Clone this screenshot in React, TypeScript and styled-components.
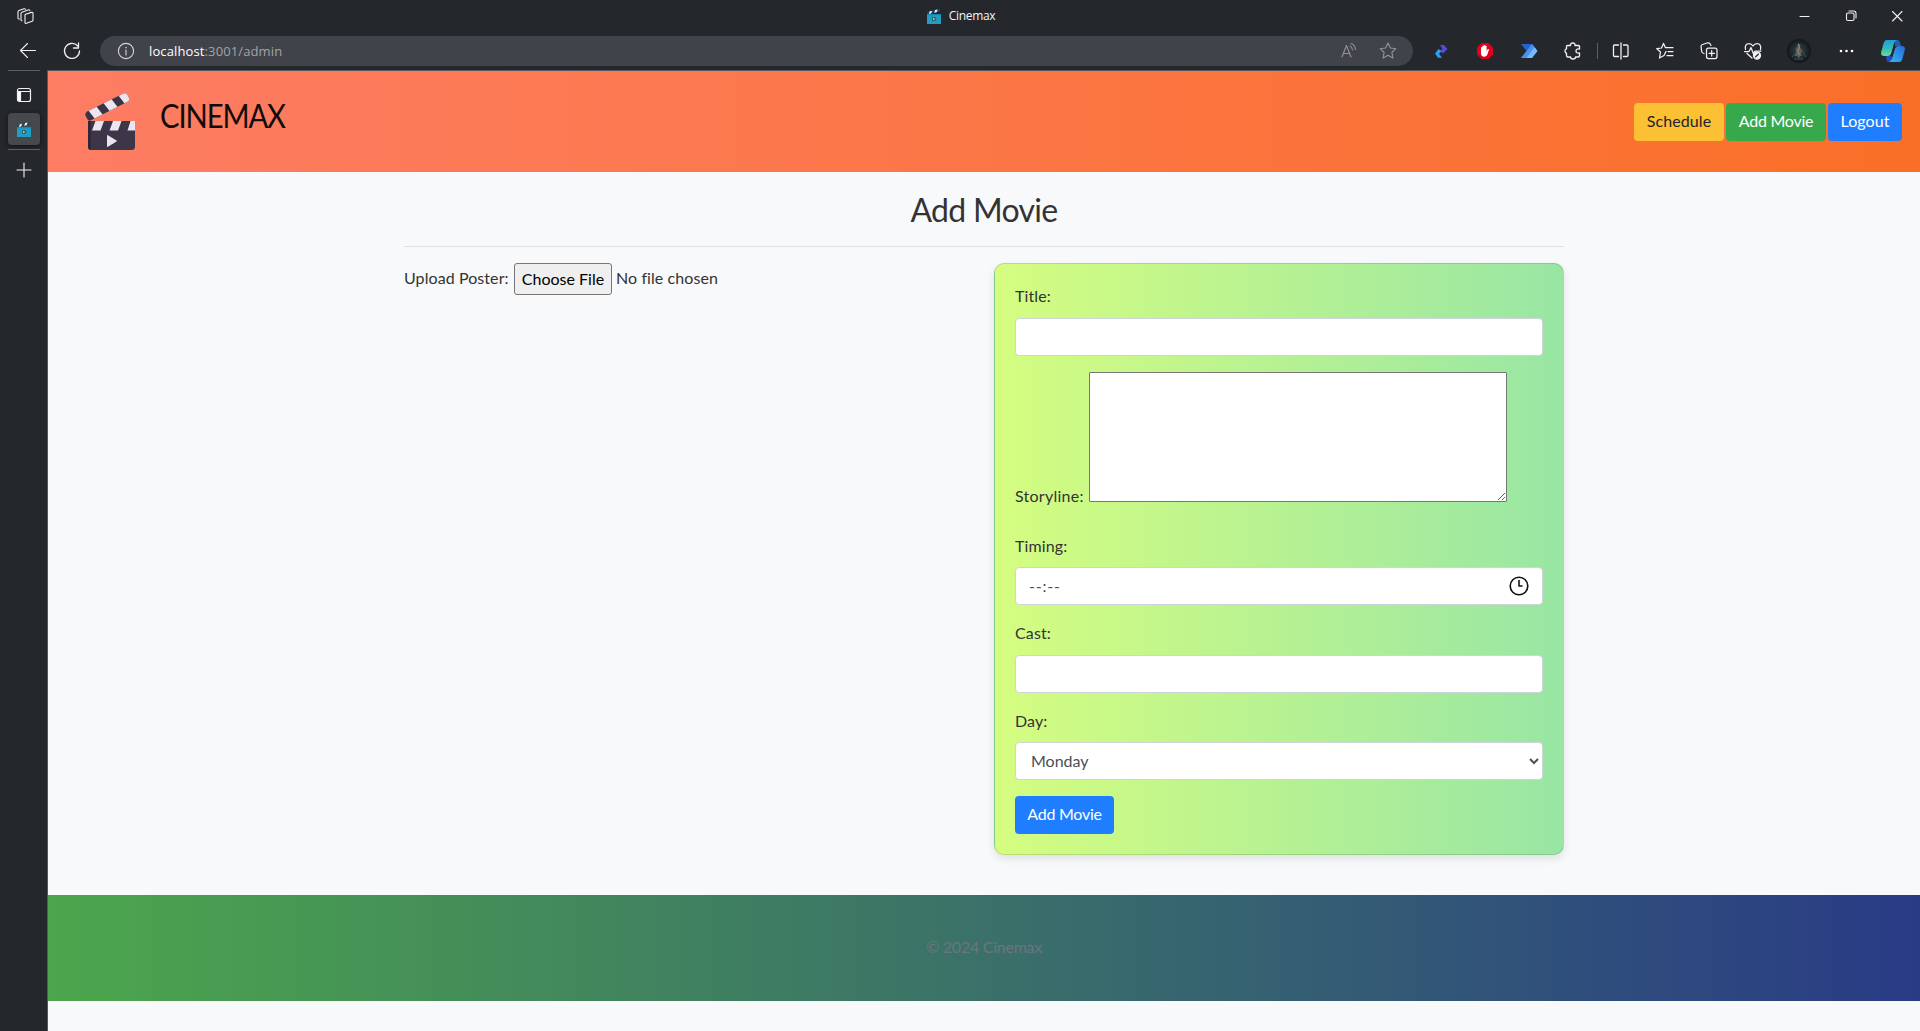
import React from "react";
import styled, { createGlobalStyle } from "styled-components";

const Global = createGlobalStyle`
  *, *::before, *::after { box-sizing: border-box; }
  html, body, #root { height: 100%; }
  body { margin: 0; background: #24272b; overflow: hidden; font-family: Lato, "Open Sans", sans-serif; font-size: 16px; line-height: 1.5; color: #333; }
`;

const Window = styled.div`display: flex; flex-direction: column; width: 1920px; height: 1031px; background: #24272b;`;
const TitleBar = styled.div`display: flex; align-items: center; justify-content: space-between; height: 34px; padding: 0 15px 2px 17px; flex: none;`;
const TabTitle = styled.div`display: flex; align-items: center; gap: 8px; margin-left: 90px; font: 12px/16px "Open Sans", sans-serif; letter-spacing: -0.3px; color: #f4f4f4;`;
const WinButtons = styled.div`display: flex; gap: 30px;`;
const Toolbar = styled.div`display: flex; align-items: center; height: 36px; padding: 0 0 2px 18px; flex: none;`;
const NavIcons = styled.div`display: flex; gap: 24px; width: 82px; flex: none;`;
const Address = styled.div`display: flex; align-items: center; width: 1313px; height: 30px; padding: 0 15px 0 16px; border-radius: 15px; background: #404349; flex: none;`;
const Url = styled.div`flex: 1; margin-left: 13px; font: 13px/20px "Open Sans", sans-serif; color: #a2a4a7; letter-spacing: 0.12px;`;
const Host = styled.span`color: #fff;`;
const AddressIcons = styled.div`display: flex; gap: 19px;`;
const Tools = styled.div`display: grid; grid-template-columns: repeat(4, 44px) 4px repeat(4, 44px) repeat(3, 47px); align-items: center; justify-items: center; margin-left: 6px;`;
const Divider = styled.div`width: 1px; height: 16px; background: #5c5f63;`;
const Body = styled.div`display: flex; flex: 1; min-height: 0;`;
const Side = styled.div`display: flex; flex-direction: column; align-items: center; width: 47px; flex: none;`;
const SideRule = styled.div`width: 32px; height: 1px; background: #5c5f63;`;
const SideSlot = styled.div<{ $h: number; $top?: number }>`display: flex; align-items: center; justify-content: center; width: 46px; height: ${p => p.$h}px; padding-top: ${p => p.$top || 0}px;`;
const ActiveTab = styled.div`display: flex; align-items: center; justify-content: center; width: 32px; height: 32px; margin-bottom: 4px; border-radius: 4px; background: #47484c; box-shadow: 0 1px 4px #111;`;
const Page = styled.div`flex: 1; border-left: 1px solid #55575b; border-top: 1px solid #55575b; background: #f8f9fb;`;

const Header = styled.header`display: flex; justify-content: space-between; height: 101px; padding: 0 18px 0 37px; background: linear-gradient(to right, #fd7d64, #fa6f27);`;
const Brand = styled.div`display: flex; gap: 24px; padding-top: 22px;`;
const BrandName = styled.div`padding-top: 1px; font-size: 32px; line-height: 43px; letter-spacing: -1.2px; color: #120b0b; transform: scaleX(0.912); transform-origin: left;`;
const Actions = styled.div`display: flex; align-items: center; gap: 2px; padding-top: 1px;`;
const Button = styled.button<{ $bg: string; $fg?: string; $w: number; $ls?: number }>`
  width: ${p => p.$w}px; height: 38px; padding: 0 0 2px; border: 0; border-radius: 4px;
  background: ${p => p.$bg}; color: ${p => p.$fg || "#fff"}; font: 16px/24px Lato, sans-serif; letter-spacing: ${p => p.$ls ?? 0.1}px; white-space: nowrap;
`;
const Container = styled.main`width: 1160px; margin: 0 auto; height: 723px;`;
const Heading = styled.h2`margin: 0; padding-top: 17px; height: 75px; text-align: center; font-weight: 400; font-size: 32px; line-height: 42px; letter-spacing: -0.7px; border-bottom: 1px solid #dfe1e3;`;
const Columns = styled.div`display: grid; grid-template-columns: 570px 570px; gap: 20px; margin-top: 16px; align-items: start;`;
const Upload = styled.div`display: flex; align-items: center; height: 32px;`;
const FileButton = styled.button`width: 98px; height: 32px; margin-right: 4px; padding: 0 0 2px; border: 1px solid #767676; border-radius: 3px; background: #efefef; font: 16px Lato, sans-serif; color: #000;`;
const UploadText = styled.span<{ $w?: number }>`width: ${p => (p.$w ? p.$w + "px" : "auto")}; padding-bottom: 2px; white-space: nowrap; letter-spacing: 0.08px;`;
const Card = styled.form`height: 592px; padding: 20px; border: 1px solid rgba(0, 0, 0, 0.125); border-radius: 10px; background: linear-gradient(to right, #d5fd80, #98e6a4); box-shadow: 0 4px 8px rgba(0, 0, 0, 0.1);`;
const Group = styled.div<{ $h: number }>`height: ${p => p.$h}px;`;
const Label = styled.label<{ $h?: number }>`display: block; height: ${p => p.$h || 34}px; line-height: 24px; letter-spacing: 0.12px;`;
const Field = styled.div`display: flex; align-items: center; justify-content: space-between; height: 38px; padding: 0 13px; border: 1px solid #ced4da; border-radius: 4px; background: #fff; color: #495057; letter-spacing: 0.8px;`;
const Select = styled.select`display: block; width: 100%; height: 38px; padding: 5px 12px 7px 11px; border: 1px solid #ced4da; border-radius: 4px; background: #fff; color: #495057; font: 16px/24px Lato, sans-serif;`;
const StoryRow = styled.div`display: flex; align-items: flex-end; gap: 5px; height: 130px;`;
const StoryLabel = styled.label`width: 69px; line-height: 24px; margin-bottom: -6px; white-space: nowrap; letter-spacing: 0.25px;`;
const Story = styled.textarea`width: 418px; height: 130px; border: 1px solid #767676; border-radius: 1px; background: #fff; resize: both;`;
const Footer = styled.footer`display: flex; justify-content: center; height: 106px; padding-top: 40px; color: #6c757d; letter-spacing: -0.25px; background: linear-gradient(to right, #4ca64c, #293b86);`;

type IconProps = { w?: number; h?: number; box?: string; color?: string; sw?: number; children: React.ReactNode };
const Icon = ({ w = 16, h, box = "0 0 16 16", color = "#f1f1f1", sw = 1.1, children }: IconProps) => (
  <svg width={w} height={h || w} viewBox={box} fill="none" stroke={color} strokeWidth={sw} strokeLinecap="round" strokeLinejoin="round">{children}</svg>
);

const MiniClapper = () => (
  <Icon w={14} h={15} box="0 0 14 15" sw={0}>
    <path d="M0 2.8 12.6 0l.6 2.5L.7 5.3z" fill="#184a66" />
    <path d="m2.8 2.2 2.3-.5-1 2.8-2.2.5zM8.2 1l2.4-.5-1 2.8-2.4.5z" fill="#f5f5f5" />
    <path d="M0 5h14v10H0z" fill="#209dc4" />
    <path d="M0 5h14v1.2H0z" fill="#1988b1" />
    <path d="M5.200 8H8l1.600 2L8 12H5.200z" fill="#245166" />
    <path d="m6 8.400 2.600 1.600L6 11.600z" fill="#f9ad25" />
  </Icon>
);

const Clapper = () => (
  <svg width="51" height="58" viewBox="0 0 51 58">
    <defs>
      <clipPath id="arm"><path d="M2 18.5 38.5.6Q41-.4 42.3 1.7l2 3.5q.6 2-1.3 3.2L5.5 27.6Q3.3 28 2.2 26L.4 22.3Q0 20 2 18.5z" /></clipPath>
      <clipPath id="slate"><path d="M3 28h47v25.5a3.5 3.5 0 0 1-3.5 3.5h-40A3.5 3.5 0 0 1 3 53.5z" /></clipPath>
    </defs>
    <g clipPath="url(#arm)">
      <path d="M0 0h50v30H0z" fill="#3b3448" />
      <path d="m3 17 8-4 7 9-8 4zM18 9.500l8-4 7 9-8 4zM33 2l8-4 7 9-8 4z" fill="#ebe5ef" />
    </g>
    <g clipPath="url(#slate)">
      <path d="M3 28h47v30H3z" fill="#3d3548" />
      <path d="M3 28h2.600v30H3z" fill="#2d2638" />
      <path d="M10.500 28h8.500l-3.500 9.500H7zM28 28h8.500L33 37.500h-8.500zM45.500 28H50v9.500h-7.500z" fill="#ebe5ef" />
    </g>
    <path d="M22.500 42.500v11l9-5.500z" fill="#ebe5ef" stroke="#ebe5ef" strokeLinejoin="round" />
  </svg>
);

const Copilot = () => (
  <svg width="24" height="23" viewBox="0 0 24 23">
    <defs>
      <linearGradient id="cpA" x1="0" y1="0" x2="0" y2="1"><stop stopColor="#219bd8" /><stop offset=".55" stopColor="#34bcb5" /><stop offset="1" stopColor="#70d98a" /></linearGradient>
      <linearGradient id="cpB" x1="0" y1="1" x2="1" y2="0"><stop stopColor="#35b7fa" /><stop offset="1" stopColor="#2768cf" /></linearGradient>
    </defs>
    <path d="M14 0h3q1.500.5 2 2.500l1 3.500h-6z" fill="#1c63b8" />
    <path d="M10 22H8q-2 0-2.500-2L5 16h6z" fill="#214bcd" />
    <path d="M5.500 0H16q-2.500 1-3.500 5l-2 7.500q-1 3.500-4 3.500H3q-3.500 0-2.800-4L2.500 3.500Q3.500 0 5.500 0z" fill="url(#cpA)" />
    <path d="M18.500 22H8q2.500-1 3.500-5l2-7.500q1-3.500 4-3.500H21q3.500 0 2.800 4l-2.300 8.500q-1 3.500-3 3.500z" fill="url(#cpB)" />
    <path d="m13.800 6.500-3.200 10" stroke="#24272b" strokeWidth="1.500" />
  </svg>
);

const Avatar = () => (
  <svg width="24" height="24" viewBox="0 0 24 24">
    <defs><radialGradient id="av"><stop stopColor="#3b474a" /><stop offset="1" stopColor="#10171c" /></radialGradient></defs>
    <circle cx="12" cy="12" r="12" fill="url(#av)" />
    <path d="m11 4 2.500 2-.5 3 2 2-1 4 1 2-2 0-1 3-1.500-3-3 0 2-4-1-3 2-3z" fill="#6f6d59" opacity=".75" />
    <path d="m11.500 5 1 4-2 3 2 4" stroke="#a69c7a" fill="none" strokeWidth=".8" />
    <path d="m5 18 4-4M15 12l4 6M7 20h9" stroke="#38515c" fill="none" />
  </svg>
);

export default function App() {
  return (
    <>
      <Global />
      <Window>
        <TitleBar>
          <Icon w={18} h={17} box="0 0 18 17"><path d="m8.500 6.200 6-1.800q1.500-.4 1.500 1v6.500q0 1-1 1.400l-5.500 2q-1.500.5-1.500-1V7.200q0-.7.500-1zM5 12.700q-1 .2-1-1V5.500q0-1 1-1.300l6.500-2.400q1-.3 1.300.8M2.500 11Q1 11.300 1 10V4q0-1 1-1.400L7 .8q1-.3 1.500.4" /></Icon>
          <TabTitle><MiniClapper />Cinemax</TabTitle>
          <WinButtons>
            <Icon><path d="M3 8.500h9" /></Icon>
            <Icon><rect x="3.500" y="5" width="7.500" height="7.500" rx="1.500" /><path d="M6 3h4.500Q13 3 13 5.500V10" /></Icon>
            <Icon><path d="m3.500 3.500 9.500 9.500m0-9.500L3.500 13" /></Icon>
          </WinButtons>
        </TitleBar>
        <Toolbar>
          <NavIcons>
            <Icon w={20} box="0 0 20 20"><path d="M17.500 9.500H2.500M9.500 2.500l-7 7 7 7" /></Icon>
            <Icon w={20} box="0 0 20 20" sw={1.3}><path d="M15.700 5A7.500 7.500 0 1 0 17.500 10M16.500 2v5h-5" /></Icon>
          </NavIcons>
          <Address>
            <Icon w={20} box="0 0 20 20" color="#d6d7d8"><circle cx="10" cy="10" r="7.600" /><path d="M10 9v5" /><circle cx="10" cy="6.500" r=".3" /></Icon>
            <Url><Host>localhost</Host>:3001/admin</Url>
            <AddressIcons>
              <Icon w={20} box="0 0 20 20" color="#929497"><path d="M3 16 7.500 4.500 12 16M4.500 12.500h6M11 5q2 1 2.500 4M12 2.500q4 1.500 4.500 6" /></Icon>
              <Icon w={20} box="0 0 20 20" color="#929497"><path d="m10 2 2.400 5 5.500.7-4 3.800 1 5.500-4.900-2.700L5.100 17l1-5.500-4-3.800L7.600 7z" /></Icon>
            </AddressIcons>
          </Address>
          <Tools>
            <Icon w={24} box="0 0 24 24" sw={0}>
              <path d="M11 6h4l3.500 4-4.500 4.500-3-2.500 2.500-2z" fill="#5949db" />
              <path d="m9.500 10 3 2-2.500 2.700 3 4H9L6 14.500z" fill="#2a9eef" />
            </Icon>
            <Icon w={18} box="0 0 18 18" sw={0}>
              <path d="M5.500 1h7L17 5.500v7L12.500 17h-7L1 12.500v-7z" fill="#df001d" />
              <path d="M5 8V5.500q.7-1 1.400 0V9V4q.7-1 1.400 0v4.500-5q.7-1 1.400 0v5V4q.7-1 1.400 0v5l.8-1.500q1-.8 1.700-.2L11.600 12q-.8 2.800-3.300 2.800Q5 14.800 5 11z" fill="#fff" />
            </Icon>
            <Icon w={18} box="0 0 18 18" sw={0}>
              <path d="M1 2h11l5.500 7-5.500 7H1l5.500-7z" fill="#2366d1" /><path d="M12 2 1 16h6L14.500 5z" fill="#4b91ef" /><path d="m14.500 5 3 4-5.500 7H6.500z" fill="#79bafa" />
            </Icon>
            <Icon w={20} box="0 0 20 20" sw={1.35}><path d="M4.500 4.500h3Q7.200 2 9.800 2T12 4.500h3.500q1 0 1 1V8Q13 7.500 13 10t3.500 2v2.500q0 1.500-1.500 1.500h-2.500q0 2-2.500 2T7.500 16H5q-1.500 0-1.500-1.500V12.200Q2 12 2 10t1.500-2.200V5.500q0-1 1-1z" /></Icon>
            <Divider />
            <Icon w={20} box="0 0 20 20" sw={1.3}><path d="M7.500 4h-4Q2.500 4 2.500 5v9.500q0 1 1 1h4M12.500 4h3.300q1.200 0 1.200 1v9.500q0 1-1.200 1h-3.300M10 2v16" /></Icon>
            <Icon w={20} box="0 0 20 20" sw={1.25}><path d="m8.500 2.500 2 4.200H18M13 10.500h5M12 14.500h6M8.500 2.500l-2 4.500-4.700.7L5.500 11l-1 6 4.500-2.500L11 10.500" /></Icon>
            <Icon w={20} box="0 0 20 20" sw={1.25}><rect x="7.500" y="7" width="10.500" height="10.500" rx="2" /><path d="M12.700 9.500v5.500M10 12.300h5.500M5 12.500Q3 12 2.700 10.500L2 5.500q0-1.500 1.500-2L8 2q2-.5 3 .7l1 1.800" /></Icon>
            <Icon w={20} box="0 0 20 20" sw={1.25}><path d="M2.500 8.500Q1.500 2.700 6 2.700q2.500 0 4 2.300 1.500-2.300 4-2.300 4.500 0 3.500 5.800M1.500 10.500H6l2-4 2.500 6.500 1.500-3h6M4 12.500l5 4.500" /><circle cx="14" cy="14.500" r="3.500" fill="#f1f1f1" /><path d="m12.600 15.800 2.800-2.600" stroke="#24272b" /></Icon>
            <Avatar />
            <Icon w={16}><g fill="#fff" stroke="none"><circle cx="3" cy="8" r="1.300" /><circle cx="8.500" cy="8" r="1.300" /><circle cx="14" cy="8" r="1.300" /></g></Icon>
            <Copilot />
          </Tools>
        </Toolbar>
        <Body>
          <Side>
            <SideRule />
            <SideSlot $h={42} $top={6}><Icon w={16} sw={1.2}><rect x="1.500" y="1.500" width="13" height="13" rx="2" /><path d="M2 4.500h12" /><path d="M2 5h2.500v9H3q-1 0-1-1z" fill="#fff" /></Icon></SideSlot>
            <ActiveTab><MiniClapper /></ActiveTab>
            <SideRule />
            <SideSlot $h={40}><Icon><path d="M8 1v14M1 8h14" /></Icon></SideSlot>
          </Side>
          <Page>
            <Header>
              <Brand><Clapper /><BrandName>CINEMAX</BrandName></Brand>
              <Actions>
                <Button $w={90} $bg="#fbc034" $fg="#212529">Schedule</Button>
                <Button $w={100} $bg="#37a84c" $ls={-0.25}>Add Movie</Button>
                <Button $w={74} $bg="#1e7eff">Logout</Button>
              </Actions>
            </Header>
            <Container>
              <Heading>Add Movie</Heading>
              <Columns>
                <Upload><UploadText $w={110}>Upload Poster:</UploadText><FileButton type="button">Choose File</FileButton><UploadText>No file chosen</UploadText></Upload>
                <Card>
                  <Group $h={88}><Label>Title:</Label><Field /></Group>
                  <Group $h={162}><StoryRow><StoryLabel>Storyline:</StoryLabel><Story /></StoryRow></Group>
                  <Group $h={87}><Label $h={33}>Timing:</Label><Field>--:--<Icon w={20} box="0 0 20 20" color="#111" sw={1.6}><circle cx="10" cy="10" r="8.800" /><path d="M10 4.500V10h3" /></Icon></Field></Group>
                  <Group $h={88}><Label>Cast:</Label><Field /></Group>
                  <Group $h={87}><Label $h={33}>Day:</Label><Select defaultValue="Monday"><option>Monday</option></Select></Group>
                  <Button type="button" $w={99} $bg="#1e7eff" $ls={-0.25}>Add Movie</Button>
                </Card>
              </Columns>
            </Container>
            <Footer>© 2024 Cinemax</Footer>
          </Page>
        </Body>
      </Window>
    </>
  );
}
